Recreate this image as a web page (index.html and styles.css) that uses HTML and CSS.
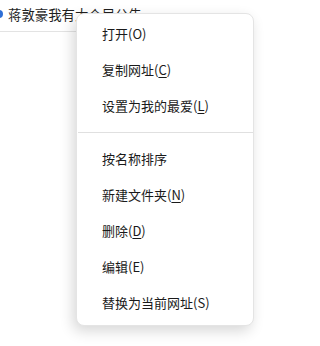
FILE: index.html
```html
<!DOCTYPE html>
<html lang="zh-CN">
<head>
<meta charset="utf-8">
<link rel="stylesheet" href="styles.css">
</head>
<body>
<div class="page">
  <div class="tab-bar">
    <span class="fav-icon"></span>
    <span class="tab-title">蒋敦豪我有大个局公告</span>
  </div>
</div>
<div class="menu">
  <div class="item">打开(O)</div>
  <div class="item">复制网址(<u>C</u>)</div>
  <div class="item">设置为我的最爱(<u>L</u>)</div>
  <div class="sep"></div>
  <div class="item">按名称排序</div>
  <div class="item">新建文件夹(<u>N</u>)</div>
  <div class="item">删除(<u>D</u>)</div>
  <div class="item">编辑(E)</div>
  <div class="item">替换为当前网址(S)</div>
</div>
</body>
</html>
```
FILE: styles.css
```css
html, body {
  margin: 0;
  padding: 0;
  background: #ffffff;
  font-family: "Noto Sans CJK SC", "Noto Sans", sans-serif;
  overflow: hidden;
}
.page {
  width: 254px;
  height: 346px;
}
.tab-bar {
  height: 31px;
  border-bottom: 1px solid #e3e3e3;
  display: flex;
  align-items: flex-start;
  overflow: hidden;
}
.fav-icon {
  width: 8px;
  height: 8px;
  margin: 10px 0 0 -5px;
  border-radius: 50%;
  background: #2f6fd6;
  flex: none;
}
.tab-title {
  margin-left: 5px;
  font-size: 13.4px;
  line-height: 16px;
  padding-top: 6px;
  color: #1f1f1f;
  white-space: nowrap;
}
.menu {
  position: absolute;
  left: 76px;
  top: 13px;
  width: 178px;
  height: 313px;
  box-sizing: border-box;
  padding: 2px 0 0 0;
  background: #ffffff;
  border: 1px solid #e4e4e4;
  border-radius: 8px;
  box-shadow: -3px 5px 14px rgba(0, 0, 0, 0.16);
}
.item {
  height: 36px;
  line-height: 36px;
  padding-left: 25px;
  font-size: 13px;
  color: #1a1a1a;
  white-space: nowrap;
}
.item u {
  text-decoration-thickness: 1px;
  text-underline-offset: 2px;
}
.sep {
  height: 1px;
  background: #e0e0e0;
  margin: 8px 0 8px 1px;
}
```
